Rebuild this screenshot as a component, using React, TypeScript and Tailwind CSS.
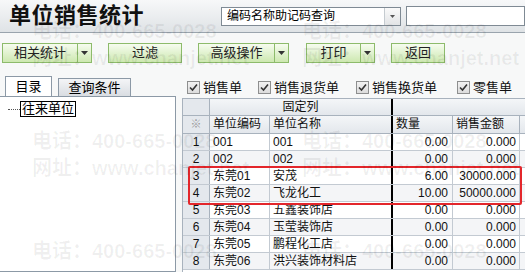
import React from 'react';

interface Row {
    no: number;
    code: string;
    name: string;
    qty: string;
    amount: string;
}

const rows: Row[] = [
    { no: 1, code: '001', name: '001', qty: '0.00', amount: '0.000' },
    { no: 2, code: '002', name: '002', qty: '0.00', amount: '0.000' },
    { no: 3, code: '东莞01', name: '安茂', qty: '6.00', amount: '30000.000' },
    { no: 4, code: '东莞02', name: '飞龙化工', qty: '10.00', amount: '50000.000' },
    { no: 5, code: '东莞03', name: '五鑫装饰店', qty: '0.00', amount: '0.000' },
    { no: 6, code: '东莞04', name: '玉莹装饰店', qty: '0.00', amount: '0.000' },
    { no: 7, code: '东莞05', name: '鹏程化工店', qty: '0.00', amount: '0.000' },
    { no: 8, code: '东莞06', name: '洪兴装饰材料店', qty: '0.00', amount: '0.000' },
];

const font = '[font-family:"Liberation_Sans","Noto_Sans_CJK_SC",sans-serif]';

const Caret = () => (
    <svg width="7" height="4" viewBox="0 0 7 4">
        <path d="M0 0 L7 0 L3.5 4 Z" fill="#333" />
    </svg>
);

const GreenButton = ({ label, width, split }: { label: string; width: string; split?: boolean }) => (
    <div className="flex h-[20px]">
        <div className={`${width} flex items-center justify-center border border-[#8dbb6b] bg-gradient-to-b from-[#f6fcef] to-[#cde8b0] text-[13px] text-[#222]`}>
            {label}
        </div>
        {split && (
            <div className="w-[14px] flex items-center justify-center border border-l-0 border-[#8dbb6b] bg-gradient-to-b from-[#f6fcef] to-[#cde8b0]">
                <Caret />
            </div>
        )}
    </div>
);

const Check = ({ label }: { label: string }) => (
    <div className="flex items-center gap-[3px]">
        <div className="w-[13px] h-[13px] border border-[#8e8f8f] bg-gradient-to-b from-[#f2f2f2] to-[#dcdcdc] flex items-center justify-center">
            <svg width="9" height="9" viewBox="0 0 9 9">
                <path d="M1 4.5 L3.5 7 L8 1.5" stroke="#333" strokeWidth="1.6" fill="none" />
            </svg>
        </div>
        <span className="text-[13px] text-[#111]">{label}</span>
    </div>
);

const Watermarks = () => {
    const marks = [
        { t: '电话：400-665-0028', x: 'left-[32px]', y: 'top-[21px]' },
        { t: '电话：400-665-0028', x: 'left-[302px]', y: 'top-[21px]' },
        { t: '网址：www.chanjet.net', x: 'left-[32px]', y: 'top-[48px]' },
        { t: '网址：www.chanjet.net', x: 'left-[302px]', y: 'top-[48px]' },
        { t: '电话：400-665-0028', x: 'left-[32px]', y: 'top-[131px]' },
        { t: '电话：400-665-0028', x: 'left-[302px]', y: 'top-[131px]' },
        { t: '网址：www.chanjet.net', x: 'left-[32px]', y: 'top-[158px]' },
        { t: '网址：www.chanjet.net', x: 'left-[302px]', y: 'top-[158px]' },
        { t: '电话：400-665-0028', x: 'left-[32px]', y: 'top-[241px]' },
        { t: '电话：400-665-0028', x: 'left-[302px]', y: 'top-[241px]' },
    ];
    return (
        <>
            {marks.map((m, i) => (
                <div key={i} className={`absolute ${m.x} ${m.y} pointer-events-none text-[20px] leading-none text-black/[0.06] font-bold whitespace-nowrap`}>
                    {m.t}
                </div>
            ))}
        </>
    );
};

const App: React.FC = () => {
    return (
        <div className={`relative w-[525px] h-[272px] overflow-hidden bg-[#f7f8f8] ${font}`}>
            {/* header */}
            <div className="h-[33px] flex items-center border-b border-[#9aa4ad] bg-gradient-to-b from-[#f7f8f9] to-[#dfe3e6]">
                <div className="w-[221px] pl-[9px] text-[22px] font-bold tracking-[0.5px] text-[#111] leading-none">单位销售统计</div>
                <div className="w-[180px] h-[19px] flex border border-[#7f8a94] bg-white">
                    <div className="flex-1 text-[12px] leading-[17px] pl-[5px] text-black">编码名称助记码查询</div>
                    <div className="w-[16px] flex items-center justify-center border-l border-[#c5cbd0] bg-gradient-to-b from-[#fafafa] to-[#e2e4e6]">
                        <svg width="5" height="3" viewBox="0 0 5 3"><path d="M0 0 L5 0 L2.5 3 Z" fill="#555" /></svg>
                    </div>
                </div>
                <div className="ml-[5px] flex-1 h-[20px] border border-[#7f8a94] bg-white" />
            </div>

            {/* toolbar */}
            <div className="h-[43px] flex items-start pt-[10px] pl-[2px]">
                <GreenButton label="相关统计" width="w-[76px]" split />
                <div className="ml-[16px]"><GreenButton label="过滤" width="w-[74px]" /></div>
                <div className="ml-[16px]"><GreenButton label="高级操作" width="w-[77px]" split /></div>
                <div className="ml-[17px]"><GreenButton label="打印" width="w-[55px]" split /></div>
                <div className="ml-[16px]"><GreenButton label="返回" width="w-[54px]" /></div>
            </div>

            {/* body */}
            <div className="flex">
                <div className="w-[176px] flex flex-col">
                    <div className="h-[20px] flex items-end pl-[5px] gap-[6px]">
                        <div className="w-[47px] h-[20px] border border-b-0 border-[#8c99a6] bg-white text-[13px] flex items-center justify-center">目录</div>
                        <div className="w-[73px] h-[18px] border border-b-0 border-[#8c99a6] bg-gradient-to-b from-[#f4f5f7] to-[#d9dde2] text-[13px] flex items-center justify-center">查询条件</div>
                    </div>
                    <div className="h-[176px] border border-[#8c99a6] border-l-0 bg-white pt-[4px] pl-[8px]">
                        <div className="flex items-center">
                            <div className="w-[12px] border-t border-dotted border-[#555]" />
                            <div className="border border-black px-[1px] text-[13px] leading-[14px] text-black">往来单位</div>
                        </div>
                    </div>
                </div>

                <div className="flex-1 pl-[6px] flex flex-col">
                    <div className="h-[22px] flex items-center pl-[5px] pt-[1px]">
                        <Check label="销售单" />
                        <div className="ml-[16px]"><Check label="销售退货单" /></div>
                        <div className="ml-[17px]"><Check label="销售换货单" /></div>
                        <div className="ml-[20px]"><Check label="零售单" /></div>
                    </div>

                    {/* grid */}
                    <div className="relative flex-1 border-l border-t border-[#a8b2bd] bg-white text-[12px] text-[#111]">
                        <div className="h-[17px] flex border-b border-[#a8b2bd] bg-gradient-to-b from-[#f4f6f8] to-[#e3e7ec]">
                            <div className="w-[27px] border-r border-[#a8b2bd] bg-[#e4e8ed]" />
                            <div className="w-[181px] flex items-center justify-center">固定列</div>
                            <div className="flex-1 border-l-2 border-black" />
                        </div>
                        <div className="h-[18px] flex border-b border-[#a8b2bd] bg-gradient-to-b from-[#f4f6f8] to-[#e3e7ec]">
                            <div className="w-[27px] border-r border-[#a8b2bd] bg-[#e4e8ed] flex items-center justify-center text-[11px] text-[#999]">※</div>
                            <div className="w-[60px] border-r border-[#a8b2bd] pl-[3px] leading-[17px]">单位编码</div>
                            <div className="w-[121px] pl-[3px] leading-[17px]">单位名称</div>
                            <div className="w-[62px] border-l-2 border-black border-r border-r-[#a8b2bd] pl-[3px] leading-[17px]">数量</div>
                            <div className="w-[67px] border-r border-[#a8b2bd] pl-[3px] leading-[17px]">销售金额</div>
                            <div className="flex-1" />
                        </div>
                        {rows.map(r => (
                            <div key={r.no} className={`h-[17px] flex border-b border-[#c3cad2] ${r.no % 2 === 0 ? 'bg-[#f4f5f7]' : 'bg-white'}`}>
                                <div className="w-[27px] border-r border-[#a8b2bd] bg-[#e4e8ed] flex items-center justify-center">{r.no}</div>
                                <div className="w-[60px] border-r border-[#c3cad2] pl-[3px] leading-[16px]">{r.code}</div>
                                <div className="w-[121px] pl-[3px] leading-[16px]">{r.name}</div>
                                <div className="w-[62px] border-l-2 border-black border-r border-r-[#c3cad2] pr-[4px] text-right leading-[16px]">{r.qty}</div>
                                <div className="w-[67px] border-r border-[#c3cad2] pr-[3px] text-right leading-[16px]">{r.amount}</div>
                                <div className="flex-1" />
                            </div>
                        ))}
                        <div className="absolute left-[5px] top-[67px] w-[334px] h-[39px] border-2 border-[#e3262b] rounded-[2px] pointer-events-none" />
                    </div>
                </div>
            </div>

            <Watermarks />
        </div>
    );
};

export default App;
